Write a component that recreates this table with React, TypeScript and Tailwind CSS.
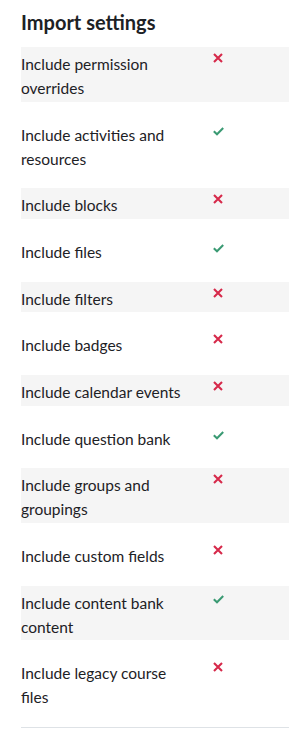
import React from "react";

type Item = { lines: string[]; ok: boolean };

const items: Item[] = [
  { lines: ["Include permission", "overrides"], ok: false },
  { lines: ["Include activities and", "resources"], ok: true },
  { lines: ["Include blocks"], ok: false },
  { lines: ["Include files"], ok: true },
  { lines: ["Include filters"], ok: false },
  { lines: ["Include badges"], ok: false },
  { lines: ["Include calendar events"], ok: false },
  { lines: ["Include question bank"], ok: true },
  { lines: ["Include groups and", "groupings"], ok: false },
  { lines: ["Include custom fields"], ok: false },
  { lines: ["Include content bank", "content"], ok: true },
  { lines: ["Include legacy course", "files"], ok: false },
];

function Cross() {
  return (
    <svg width="10" height="10" viewBox="0 0 10 10" className="block">
      <path d="M1 1 L9 9 M9 1 L1 9" stroke="#d6294a" strokeWidth="2.1" strokeLinecap="butt" fill="none" />
    </svg>
  );
}

function Check() {
  return (
    <svg width="11" height="9" viewBox="0 0 11 9" className="block">
      <path d="M0.8 4.2 L4 7.3 L10.2 1" stroke="#3a9a73" strokeWidth="2" strokeLinejoin="miter" fill="none" />
    </svg>
  );
}

function Row({ item, striped }: { item: Item; striped: boolean }) {
  return (
    <div className={striped ? "bg-[#f5f5f5]" : "py-4"}>
      <div className="flex items-start pt-[5px] pb-[1.67px]">
        <div className="w-[192px] shrink-0 text-[15.5px] leading-[24px] text-[#1d2125]">
          {item.lines.map((l, i) => (
            <div key={i}>{l}</div>
          ))}
        </div>
        <div className={item.ok ? "pt-[4px]" : "pt-[1px]"}>
          {item.ok ? <Check /> : <Cross />}
        </div>
      </div>
    </div>
  );
}

export default function App() {
  return (
    <div
      className="w-[289px] min-h-[732px] bg-white overflow-hidden"
      style={{ fontFamily: "Lato, 'Noto Sans', sans-serif" }}
    >
      <div className="pl-[21px]">
        <h2 className="h-[47px] pt-[8px] text-[20px] leading-[28px] font-bold text-[#1d2125]">
          Import settings
        </h2>
        <div className="border-b border-[#dee2e6]">
          {items.map((it, i) => (
            <Row key={i} item={it} striped={i % 2 === 0} />
          ))}
        </div>
      </div>
    </div>
  );
}
